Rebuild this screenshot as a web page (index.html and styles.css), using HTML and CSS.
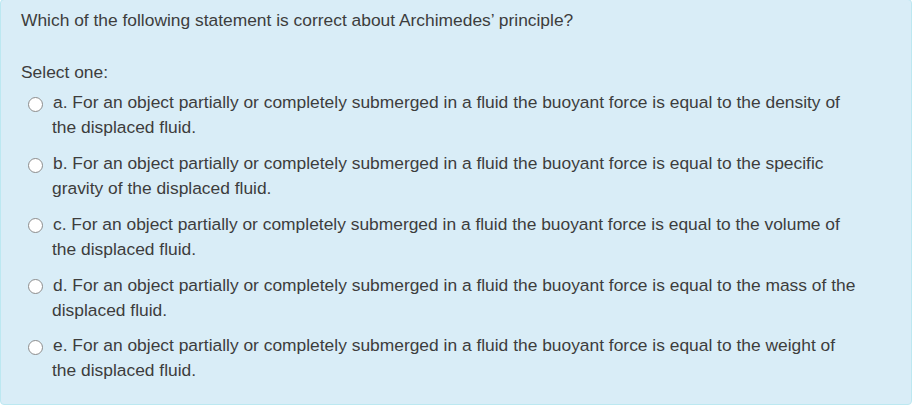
FILE: index.html
```html
<!DOCTYPE html>
<html>
<head>
<meta charset="utf-8">
<link rel="stylesheet" href="styles.css">
</head>
<body>
<div class="formulation">
  <div class="qtext">Which of the following statement is correct about Archimedes’ principle?</div>
  <div class="prompt">Select one:</div>
  <div class="answer">
    <div class="opt"><input type="radio" name="q" class="radio" id="o1"><label for="o1"><span class="num">a.</span> For an object partially or completely submerged in a fluid the buoyant force is equal to the density of the displaced fluid.</label></div>
    <div class="opt"><input type="radio" name="q" class="radio" id="o2"><label for="o2"><span class="num">b.</span> For an object partially or completely submerged in a fluid the buoyant force is equal to the specific gravity of the displaced fluid.</label></div>
    <div class="opt"><input type="radio" name="q" class="radio" id="o3"><label for="o3"><span class="num">c.</span> For an object partially or completely submerged in a fluid the buoyant force is equal to the volume of the displaced fluid.</label></div>
    <div class="opt"><input type="radio" name="q" class="radio" id="o4"><label for="o4"><span class="num">d.</span> For an object partially or completely submerged in a fluid the buoyant force is equal to the mass of the displaced fluid.</label></div>
    <div class="opt"><input type="radio" name="q" class="radio" id="o5"><label for="o5"><span class="num">e.</span> For an object partially or completely submerged in a fluid the buoyant force is equal to the weight of the displaced fluid.</label></div>
  </div>
</div>
</body>
</html>
```
FILE: styles.css
```css
html, body {
  margin: 0;
  padding: 0;
  background: #ffffff;
}
body {
  font-family: "Liberation Sans", Arial, sans-serif;
  font-size: 17.4px;
  line-height: 25px;
  color: #3d3d3d;
}
.formulation {
  width: 871px;
  margin-top: -1px;
  padding: 8px 19px 15px 20px;
  background: #d9edf7;
  border: 1px solid #bce8f1;
  border-radius: 4px;
}
.qtext {
  margin-bottom: 27px;
}
.prompt {
  margin-bottom: 0;
}
.opt {
  padding: 5.375px 30px 5.375px 31px;
}
.radio {
  appearance: none;
  -webkit-appearance: none;
  float: left;
  width: 15px;
  height: 15px;
  margin: 6.5px 10px 0 -24px;
  padding: 0;
  border: 1px solid #8c8c8c;
  border-radius: 50%;
  background: #ffffff;
  box-sizing: border-box;
}
```
